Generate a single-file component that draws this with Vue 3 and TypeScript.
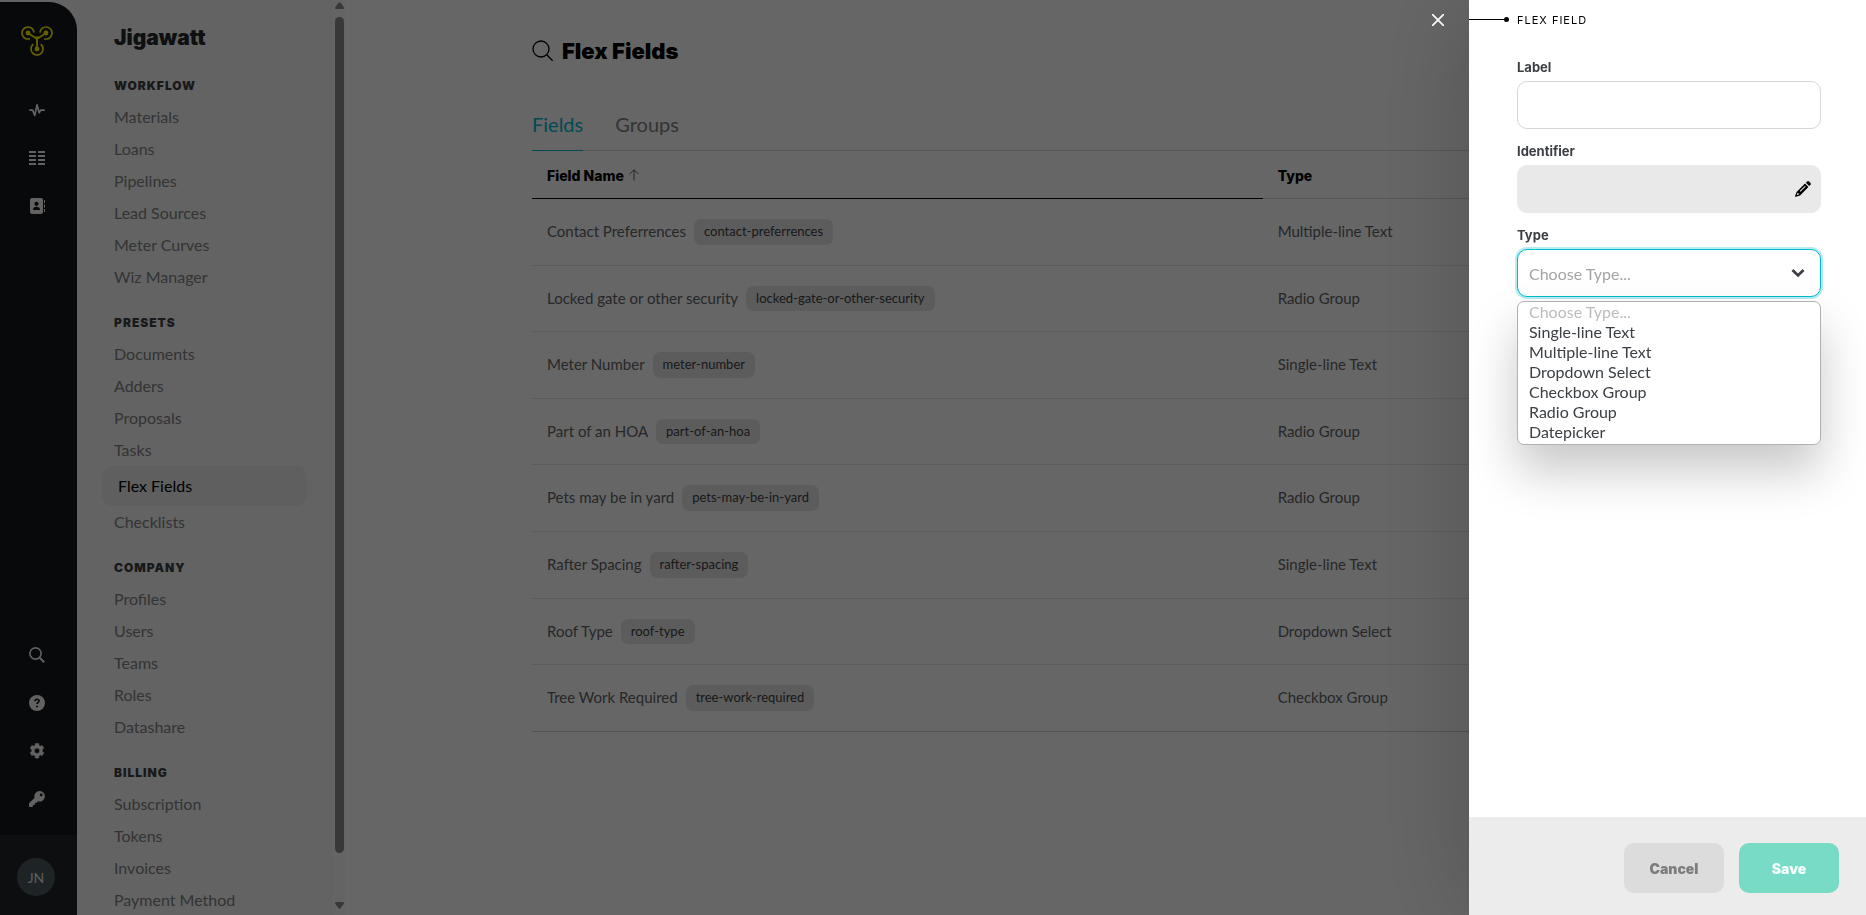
<script setup lang="ts">
import { ref } from 'vue'

interface NavItem {
  name: string
  active?: boolean
}
interface NavGroup {
  title: string
  items: NavItem[]
}
interface FieldRow {
  name: string
  slug: string
  type: string
}

const groups: NavGroup[] = [
  {
    title: 'Workflow',
    items: [
      { name: 'Materials' },
      { name: 'Loans' },
      { name: 'Pipelines' },
      { name: 'Lead Sources' },
      { name: 'Meter Curves' },
      { name: 'Wiz Manager' },
    ],
  },
  {
    title: 'Presets',
    items: [
      { name: 'Documents' },
      { name: 'Adders' },
      { name: 'Proposals' },
      { name: 'Tasks' },
      { name: 'Flex Fields', active: true },
      { name: 'Checklists' },
    ],
  },
  {
    title: 'Company',
    items: [{ name: 'Profiles' }, { name: 'Users' }, { name: 'Teams' }, { name: 'Roles' }, { name: 'Datashare' }],
  },
  {
    title: 'Billing',
    items: [{ name: 'Subscription' }, { name: 'Tokens' }, { name: 'Invoices' }, { name: 'Payment Method' }],
  },
]

const rows: FieldRow[] = [
  { name: 'Contact Preferrences', slug: 'contact-preferrences', type: 'Multiple-line Text' },
  { name: 'Locked gate or other security', slug: 'locked-gate-or-other-security', type: 'Radio Group' },
  { name: 'Meter Number', slug: 'meter-number', type: 'Single-line Text' },
  { name: 'Part of an HOA', slug: 'part-of-an-hoa', type: 'Radio Group' },
  { name: 'Pets may be in yard', slug: 'pets-may-be-in-yard', type: 'Radio Group' },
  { name: 'Rafter Spacing', slug: 'rafter-spacing', type: 'Single-line Text' },
  { name: 'Roof Type', slug: 'roof-type', type: 'Dropdown Select' },
  { name: 'Tree Work Required', slug: 'tree-work-required', type: 'Checkbox Group' },
]

const types: string[] = [
  'Single-line Text',
  'Multiple-line Text',
  'Dropdown Select',
  'Checkbox Group',
  'Radio Group',
  'Datepicker',
]

const label = ref('')
const identifier = ref('')
const selected = ref('')
const menuOpen = ref(true)

function choose(type: string): void {
  selected.value = type
  menuOpen.value = false
}
</script>

<template>
  <div class="app">
    <nav class="rail" aria-label="Main">
      <a class="logo" href="#" aria-label="Home">
        <svg width="32" height="32" viewBox="0 0 32 32" fill="none" stroke="currentColor">
          <circle cx="7" cy="8" r="6" stroke-width="1.7" pathLength="360" stroke-dasharray="285 75" transform="rotate(71 7 8)" />
          <circle cx="25" cy="8" r="6" stroke-width="1.7" pathLength="360" stroke-dasharray="285 75" transform="rotate(184 25 8)" />
          <circle cx="16" cy="24" r="6" stroke-width="1.7" pathLength="360" stroke-dasharray="285 75" transform="rotate(-52 16 24)" />
          <path d="M7 8l9 6 9-6M16 13.500v10" stroke-width="1.800" />
          <path d="M12.500 11.500h7l-2.500 2.500-.3 4h-1.400l-.3-4z" fill="currentColor" stroke="none" />
          <g fill="currentColor" stroke="none">
            <circle cx="7" cy="8" r="2.400" />
            <circle cx="25" cy="8" r="2.400" />
            <circle cx="16" cy="24" r="2.400" />
          </g>
        </svg>
      </a>
      <div class="rail-group">
        <button type="button" aria-label="Activity">
          <svg width="16" height="16" viewBox="0 0 16 16" fill="none" stroke="currentColor" stroke-width="1.700" stroke-linejoin="round" stroke-linecap="round">
            <path d="M.9 8.200h2.700L5.800 13.300 8 2.800l2.200 8 1.500-2.600h3.400" />
          </svg>
        </button>
        <button type="button" aria-label="Pipelines">
          <svg width="16" height="16" viewBox="0 0 16 16" fill="currentColor">
            <path d="M0 1h7v2H0zM9 1h7v2H9zM0 5h7v2H0zM9 5h7v2H9zM0 9h7v2H0zM9 9h7v2H9zM0 13h7v2H0zM9 13h7v2H9z" />
          </svg>
        </button>
        <button type="button" aria-label="Contacts">
          <svg width="16" height="16" viewBox="0 0 16 16">
            <rect x="1" y="0" width="13" height="16" rx="2" fill="currentColor" />
            <path d="M15 2h1v3h-1zM15 6.500h1v3h-1zM15 11h1v3h-1z" fill="currentColor" />
            <circle cx="7.500" cy="5.800" r="2.100" fill="#12171b" />
            <path d="M4 12c0-2.200 1.300-3.200 3.500-3.200S11 9.800 11 12z" fill="#12171b" />
          </svg>
        </button>
      </div>
      <div class="rail-group rail-low">
        <button type="button" aria-label="Search">
          <svg width="16" height="16" viewBox="0 0 16 16" fill="none" stroke="currentColor">
            <circle cx="6.500" cy="6.500" r="5.600" stroke-width="1.600" />
            <path d="M10.600 10.600l4.600 4.600" stroke-width="2" />
          </svg>
        </button>
        <button type="button" aria-label="Help">
          <svg width="16" height="16" viewBox="0 0 16 16">
            <circle cx="8" cy="8" r="8" fill="currentColor" />
            <path d="M5.900 6.300c.1-1.300.9-1.900 2.100-1.900s2.100.6 2.100 1.700c0 1.500-2.100 1.300-2.100 3" fill="none" stroke="#12171b" stroke-width="1.600" />
            <circle cx="8" cy="11.500" r="1" fill="#12171b" />
          </svg>
        </button>
        <button type="button" aria-label="Settings">
          <svg width="16" height="16" viewBox="0 0 16 16">
            <path
              fill="currentColor"
              fill-rule="evenodd"
              d="M6.400.4h3.200l.4 2.100 1.200.7 2-.7 1.600 2.700-1.600 1.500v1.600l1.600 1.500-1.600 2.800-2-.7-1.200.7-.4 2.500H6.400L6 12.600l-1.200-.7-2 .7L1.200 9.800l1.600-1.500V6.700L1.200 5.200l1.600-2.700 2 .7L6 2.500zM8 5.100a2.700 2.700 0 100 5.400 2.700 2.700 0 000-5.400z"
              stroke="currentColor"
              stroke-width=".6"
              stroke-linejoin="round"
            />
          </svg>
        </button>
        <button type="button" aria-label="Keys">
          <svg width="16" height="16" viewBox="0 0 16 16">
            <path
              fill="currentColor"
              fill-rule="evenodd"
              d="M10.700 0A5.300 5.300 0 005.600 6.800L.3 12.100a1 1 0 00-.3.600V15.200c0 .5.300.8.800.8h2.300c.5 0 .8-.3.800-.8V14h1.200c.5 0 .8-.3.800-.8V12h.9c.3 0 .5-.1.600-.3l1.400-1.400A5.300 5.300 0 1010.700 0zm1.500 2.600a1.400 1.400 0 110 2.800 1.400 1.400 0 010-2.800z"
            />
          </svg>
        </button>
      </div>
      <div class="account">
        <button type="button" class="avatar">JN</button>
      </div>
    </nav>

    <aside class="sidebar">
      <h2 class="company">Jigawatt</h2>
      <section v-for="group in groups" :key="group.title" class="nav-group">
        <h3>{{ group.title }}</h3>
        <ul>
          <li v-for="item in group.items" :key="item.name">
            <a href="#" :class="{ active: item.active }">{{ item.name }}</a>
          </li>
        </ul>
      </section>
    </aside>
    <div class="scrollbar" aria-hidden="true">
      <svg width="9" height="7" viewBox="0 0 9 7"><path d="M3.500.8q1-1 2 0L9 5.500Q9 7 8 7H1Q0 7 0 5.500z" /></svg>
      <div class="track"><div class="thumb"></div></div>
      <svg width="9" height="7" viewBox="0 0 9 7"><path d="M3.500 6.200q1 1 2 0L9 1.500Q9 0 8 0H1Q0 0 0 1.500z" /></svg>
    </div>

    <main class="main">
      <div class="content">
        <h1>
          <svg width="22" height="22" viewBox="0 0 22 22" fill="none" stroke="currentColor" stroke-width="1.300">
            <circle cx="9" cy="9" r="8" />
            <path d="M14.700 14.700l6 6" />
          </svg>
          Flex Fields
        </h1>
        <div class="tabs" role="tablist">
          <button type="button" role="tab" class="tab current" aria-selected="true">Fields</button>
          <button type="button" role="tab" class="tab" aria-selected="false">Groups</button>
        </div>
        <table>
          <thead>
            <tr>
              <th class="sorted" scope="col">
                Field Name
                <svg width="10" height="12" viewBox="0 0 10 12" fill="none" stroke="currentColor">
                  <path d="M5 11.500V1M.6 5L5 .8 9.400 5" />
                </svg>
              </th>
              <th scope="col">Type</th>
            </tr>
          </thead>
          <tbody>
            <tr v-for="row in rows" :key="row.slug">
              <td>
                <div class="cell">
                  <span>{{ row.name }}</span>
                  <span class="chip">{{ row.slug }}</span>
                </div>
              </td>
              <td>
                <div class="cell">{{ row.type }}</div>
              </td>
            </tr>
          </tbody>
        </table>
      </div>
    </main>

    <div class="backdrop">
      <button type="button" class="close" aria-label="Close">
        <svg width="12" height="12" viewBox="0 0 12 12" fill="none" stroke="currentColor" stroke-width="1.800">
          <path d="M0 0l12 12M12 0L0 12" />
        </svg>
      </button>
      <form class="drawer" @submit.prevent>
        <header>
          <span class="lead"></span>
          <h2>Flex Field</h2>
        </header>
        <div class="fields">
          <div class="field">
            <label for="field-label">Label</label>
            <input id="field-label" v-model="label" type="text" />
          </div>
          <div class="field">
            <label for="field-identifier">Identifier</label>
            <div class="control">
              <input id="field-identifier" v-model="identifier" type="text" class="locked" readonly />
              <button type="button" class="edit" aria-label="Edit identifier">
                <svg width="16" height="16" viewBox="0 0 16 16">
                  <path fill="currentColor" d="M10.900 1.700L12.200.5q.9-.8 1.800 0l1.500 1.500q.8.9 0 1.800l-1.300 1.300z" />
                  <path fill="currentColor" fill-rule="evenodd" d="M10 2.600L1.600 10.900.1 15q-.2 1 .8.800l4.200-1.400 8.300-8.400zM9.900 4.900l.8.700-5.200 5.200-.8-.7zM2.700 11.800l1.500 1.500-1.800.8-.6-.6z" />
                </svg>
              </button>
            </div>
          </div>
          <div class="field">
            <label for="field-type">Type</label>
            <div class="control">
              <select id="field-type" v-model="selected" :class="{ empty: !selected }" @mousedown.prevent="menuOpen = !menuOpen">
                <option value="" disabled>Choose Type...</option>
                <option v-for="type in types" :key="type">{{ type }}</option>
              </select>
              <svg class="chevron" width="14" height="10" viewBox="0 0 14 10" fill="none" stroke="currentColor" stroke-width="2.800">
                <path d="M1.500 2L7 7.400 12.500 2" />
              </svg>
              <ul v-if="menuOpen" class="menu" role="listbox" aria-label="Type">
                <li role="option" aria-disabled="true" class="placeholder">Choose Type...</li>
                <li v-for="type in types" :key="type" role="option" @click="choose(type)">{{ type }}</li>
              </ul>
            </div>
          </div>
        </div>
        <footer>
          <button type="button" class="cancel">Cancel</button>
          <button type="submit" class="save">Save</button>
        </footer>
      </form>
    </div>
  </div>
</template>

<style>
html,
body {
  margin: 0;
  overflow: hidden;
}
</style>

<style scoped>
.app {
  --heavy: Inter, Lato, sans-serif;
  display: flex;
  height: 100vh;
  overflow: hidden;
  background: #fff;
  color: #3c4045;
  font-family: Lato, "Open Sans", sans-serif;
  font-size: 16px;
}
.app * {
  box-sizing: border-box;
}
button,
input,
select {
  font-family: inherit;
  border: 0;
  margin: 0;
}
button {
  padding: 0;
  background: none;
  cursor: pointer;
}
h1,
h2,
h3,
ul {
  margin: 0;
  padding: 0;
  list-style: none;
}
a {
  color: inherit;
  text-decoration: none;
}
svg {
  display: block;
  flex: none;
}

/* icon rail */
.rail {
  display: flex;
  flex-direction: column;
  flex: none;
  width: 77px;
  margin-top: 2px;
  overflow: hidden;
  border-radius: 0 28px 0 0;
  background: #12171b;
  box-shadow: 0 -28px 0 #f8f8f8;
  color: #f5f5f5;
}
.logo {
  align-self: center;
  padding: 23px 4px 0 0;
  color: #fff000;
}
.rail-group {
  display: flex;
  flex-direction: column;
  align-items: center;
  gap: 32px;
  padding: 45px 3px 0 0;
}
.rail-group button {
  color: #f5f5f5;
}
.rail-low {
  margin-top: auto;
  padding: 0 3px 28px 0;
}
.account {
  display: flex;
  align-items: center;
  justify-content: center;
  height: 80px;
  padding: 4px 5px 0 0;
  background: #20252a;
}
.avatar {
  width: 38px;
  height: 38px;
  border-radius: 50%;
  background: #4b575f;
  color: #e8e8e8;
  font-size: 14px;
}

/* section navigation */
.sidebar {
  flex: none;
  width: 255px;
  padding: 20px 24px 0 25px;
  overflow: hidden;
  border-right: 1px solid #f2f2f2;
  background: #f8f8f8;
}
.company {
  padding: 0 12px;
  color: #26292d;
  font-family: var(--heavy);
  font-size: 21px;
  font-weight: 900;
  line-height: 36px;
}
.nav-group {
  margin-top: 13px;
}
.nav-group h3 {
  padding: 2px 12px 0;
  color: #3c4045;
  font-family: var(--heavy);
  font-size: 12px;
  font-weight: 900;
  letter-spacing: 1px;
  line-height: 30px;
  text-transform: uppercase;
}
.nav-group a {
  display: block;
  padding: 0 12px;
  color: #808284;
  font-size: 16px;
  line-height: 32px;
}
.nav-group .active {
  padding: 0 16px;
  border-radius: 10px;
  background: #ededed;
  color: #000;
  line-height: 40px;
}
.scrollbar {
  display: flex;
  flex-direction: column;
  flex: none;
  gap: 8px;
  width: 13px;
  padding: 2px 1px 6px 3px;
  background: #fafafa;
  fill: #8c8c8c;
}
.track {
  flex: 1;
}
.thumb {
  height: calc(100% - 41px);
  border-radius: 5px;
  background: #8c8c8c;
}

/* page content */
.main {
  flex: 1;
  min-width: 0;
  padding: 36px 40px 0;
}
.content {
  max-width: 1147px;
  margin: 0 auto;
}
h1 {
  display: flex;
  align-items: center;
  gap: 8px;
  color: #000;
  font-family: var(--heavy);
  font-size: 22px;
  font-weight: 900;
  line-height: 30px;
}
.tabs {
  display: flex;
  gap: 32px;
  margin-top: 34px;
  border-bottom: 1px solid #dcdcdc;
}
.tab {
  height: 51px;
  margin-bottom: -1px;
  padding-bottom: 3px;
  border-bottom: 1px solid transparent;
  color: #808284;
  font-size: 20px;
}
.tab.current {
  border-color: #00bcd0;
  color: #00bcd0;
}
table {
  width: 100%;
  border-collapse: separate;
  border-spacing: 0;
}
th {
  height: 48px;
  padding: 2px 15px 0;
  border-bottom: 1px solid #dcdcdc;
  color: #000;
  font-family: var(--heavy);
  font-size: 14px;
  font-weight: 800;
  text-align: left;
}
.sorted {
  width: 63.7%;
  border-color: #000;
}
.sorted svg {
  display: inline-block;
  margin-left: 2px;
  color: #55585b;
}
td {
  padding: 20px 15px;
  border-bottom: 1px solid #e6e6e6;
  color: #606467;
  line-height: 1.6em;
}
tbody tr:last-child td {
  border-color: #c8c8c8;
}
.cell {
  display: flex;
  gap: 8px;
  font-size: 15px;
}
.chip {
  padding: 0 10px;
  border-radius: 7px;
  background: #e6e6e6;
  color: #3c4045;
  font-size: 13px;
}

/* drawer */
.backdrop {
  position: fixed;
  inset: 0;
  display: flex;
  align-items: flex-start;
  justify-content: flex-end;
  background: rgba(0, 0, 0, 0.6);
}
.close {
  padding: 14px 25px;
  color: #fff;
}
.drawer {
  display: flex;
  flex-direction: column;
  width: 397px;
  height: 100%;
  background: #fff;
  box-shadow: 0 0 100px rgba(0, 0, 0, 0.2);
}
.drawer header {
  display: flex;
  align-items: center;
  gap: 8px;
  height: 39px;
}
.lead {
  display: flex;
  align-items: center;
  justify-content: flex-end;
  width: 40px;
  height: 1px;
  background: #000;
}
.lead::after {
  width: 5px;
  height: 5px;
  border-radius: 50%;
  background: #000;
  content: "";
}
.drawer h2 {
  color: #000;
  font-family: var(--heavy);
  font-size: 11px;
  font-weight: 400;
  letter-spacing: 1px;
  text-transform: uppercase;
}
.fields {
  display: flex;
  flex: 1;
  flex-direction: column;
  gap: 12px;
  padding: 18px 45px 0 48px;
}
.field {
  display: flex;
  flex-direction: column;
  gap: 4px;
}
label {
  font-family: var(--heavy);
  font-size: 13px;
  font-weight: 700;
  line-height: 20px;
}
.control {
  position: relative;
}
.field input,
.field select {
  display: block;
  width: 100%;
  height: 48px;
  padding: 0 11px;
  border: 1px solid #d6d6d6;
  border-radius: 10px;
  outline: 0;
  background: #fff;
  color: #3c4045;
  font-size: 16px;
}
.field .locked {
  border-color: #e9e9e9;
  background: #e9e9e9;
}
.edit {
  position: absolute;
  top: 16px;
  right: 10px;
  color: #000;
}
.field select {
  appearance: none;
  border-color: #00bcd0;
  box-shadow: 0 0 0 2px #b8ecf1;
}
.field select.empty {
  color: #a4a4a4;
  opacity: 1;
}
.chevron {
  position: absolute;
  top: 19px;
  right: 16px;
  pointer-events: none;
}
.menu {
  position: absolute;
  top: 52px;
  right: 0;
  left: 0;
  padding: 0 0 2px;
  border: 1px solid #b0b0b0;
  border-radius: 7px;
  background: #fff;
  box-shadow: 0 26px 48px rgba(0, 0, 0, 0.22);
}
.menu li {
  padding: 0 11px;
  font-size: 16px;
  line-height: 20px;
}
.menu .placeholder {
  color: #bcbcbc;
}
footer {
  display: flex;
  justify-content: flex-end;
  gap: 15px;
  padding: 26px 27px 22px;
  background: #ececec;
}
footer button {
  width: 100px;
  height: 50px;
  border-radius: 10px;
  font-family: var(--heavy);
  font-size: 14px;
  font-weight: 900;
}
.cancel {
  background: #dcdcdc;
  color: #7d7d7d;
}
.save {
  background: #78dbc6;
  color: #f4fffc;
}
</style>
